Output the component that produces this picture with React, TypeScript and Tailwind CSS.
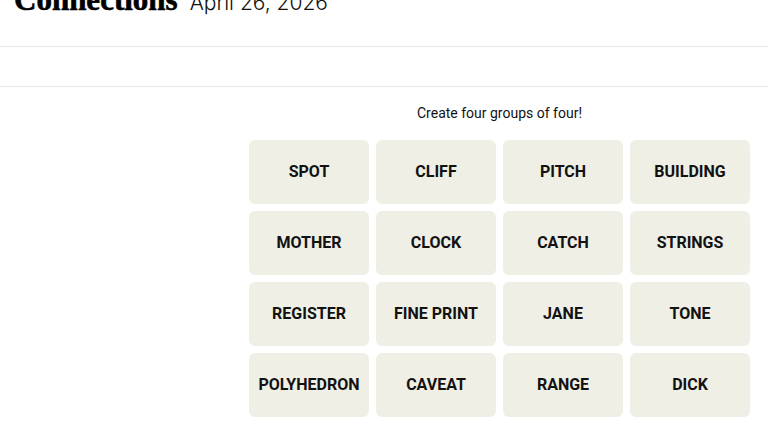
import React from "react";

const WORDS = [
  "SPOT", "CLIFF", "PITCH", "BUILDING",
  "MOTHER", "CLOCK", "CATCH", "STRINGS",
  "REGISTER", "FINE PRINT", "JANE", "TONE",
  "POLYHEDRON", "CAVEAT", "RANGE", "DICK",
];

export default function App() {
  return (
    <div className="h-[432px] w-[768px] overflow-hidden bg-white text-black">
      {/* page is scrolled a little, title is cut at the top */}
      <header className="-mt-[16px] flex h-[63px] items-baseline gap-[12px] border-b border-[#e6e6e6] px-[14px]">
        <h1 className="text-[31px] font-bold leading-[32px] [-webkit-text-stroke:0.6px_black] [font-family:'Liberation_Serif',serif]">
          Connections
        </h1>
        <span className="text-[21px] font-light leading-[32px] text-[#121212] [font-family:Inter,'Liberation_Sans',sans-serif]">
          April 26, 2026
        </span>
      </header>

      <div className="h-[40px] border-b border-[#e6e6e6]" />

      <main className="flex">
        <div className="w-[249px] shrink-0" />
        <div className="w-[501px]">
          <p className="pt-[17px] text-center text-[14px] leading-[18px] text-[#121212] [font-family:Roboto,'Liberation_Sans',sans-serif]">
            Create four groups of four!
          </p>
          <div className="mt-[18px] grid grid-cols-4 gap-[7px]">
            {WORDS.map((w) => (
              <div
                key={w}
                className="flex h-[64px] items-center justify-center rounded-[6px] bg-[#efefe6] text-[16px] font-bold uppercase text-[#121212] [font-family:Roboto,'Liberation_Sans',sans-serif]"
              >
                {w}
              </div>
            ))}
          </div>
        </div>
      </main>
    </div>
  );
}
